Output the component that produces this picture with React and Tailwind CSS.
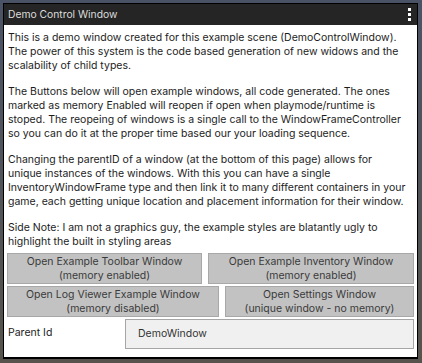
export default function App() {
  const font = { fontFamily: "Inter, 'Noto Sans', sans-serif" };
  return (
    <div className="w-[422px] h-[363px] bg-gradient-to-b from-[#4a5366] to-[#57534c] p-[3px] pr-[4px] pb-[4px]" style={font}>
      <div className="w-full h-full flex flex-col border border-black border-b-2 bg-white overflow-hidden">
        <div className="h-[21px] bg-[#252525] flex items-center justify-between pl-[4px] pr-[6px] shrink-0">
          <span className="text-[10.3px] text-[#dcdcdc] leading-none">Demo Control Window</span>
          <div className="flex flex-col gap-[2px]">
            <div className="w-[3px] h-[3px] bg-white"></div>
            <div className="w-[3px] h-[3px] bg-white"></div>
            <div className="w-[3px] h-[3px] bg-white"></div>
          </div>
        </div>
        <div className="flex-1 flex flex-col px-[3px] pt-[6px] text-[#1c1c1c]">
          <div className="text-[10.5px] leading-[14px] pl-[1px] pr-[7px]">
            <p>This is a demo window created for this example scene (DemoControlWindow). The power of this system is the code based generation of new widows and the scalability of child types.</p>
            <p className="mt-[12px]">The Buttons below will open example windows, all code generated. The ones marked as memory Enabled will reopen if open when playmode/runtime is stoped. The reopeing of windows is a single call to the WindowFrameController so you can do it at the proper time based our your loading sequence.</p>
            <p className="mt-[12px]">Changing the parentID of a window (at the bottom of this page) allows for unique instances of the windows. With this you can have a single InventoryWindowFrame type and then link it to many different containers in your game, each getting unique location and placement information for their window.</p>
            <p className="mt-[12px]">Side Note: I am not a graphics guy, the example styles are blatantly ugly to highlight the built in styling areas</p>
          </div>
          <div className="mt-[4px] flex flex-col gap-[2px] text-[10.5px] leading-[14px] text-[#3a3a3a]">
            <div className="flex gap-[6px]">
              <div className="w-[195px] h-[31px] bg-[#c2c2c2] border border-[#a8a8a8] flex flex-col items-center justify-center">
                <span>Open Example Toolbar Window</span>
                <span>(memory enabled)</span>
              </div>
              <div className="flex-1 h-[31px] bg-[#c2c2c2] border border-[#a8a8a8] flex flex-col items-center justify-center">
                <span>Open Example Inventory Window</span>
                <span>(memory enabled)</span>
              </div>
            </div>
            <div className="flex gap-[6px]">
              <div className="w-[212px] h-[31px] bg-[#c2c2c2] border border-[#a8a8a8] flex flex-col items-center justify-center">
                <span>Open Log Viewer Example Window</span>
                <span>(memory disabled)</span>
              </div>
              <div className="flex-1 h-[31px] bg-[#c2c2c2] border border-[#a8a8a8] flex flex-col items-center justify-center">
                <span>Open Settings Window</span>
                <span>(unique window - no memory)</span>
              </div>
            </div>
            <div className="flex items-center">
              <span className="w-[118px] pl-[1px] text-[10.5px] text-[#222] -mt-[2px]">Parent Id</span>
              <div className="flex-1 h-[30px] bg-[#f0f0f0] border border-[#a6a6a6] flex items-center pl-[12px] text-[10.5px] text-[#333]">
                DemoWindow
              </div>
            </div>
          </div>
        </div>
      </div>
    </div>
  );
}
